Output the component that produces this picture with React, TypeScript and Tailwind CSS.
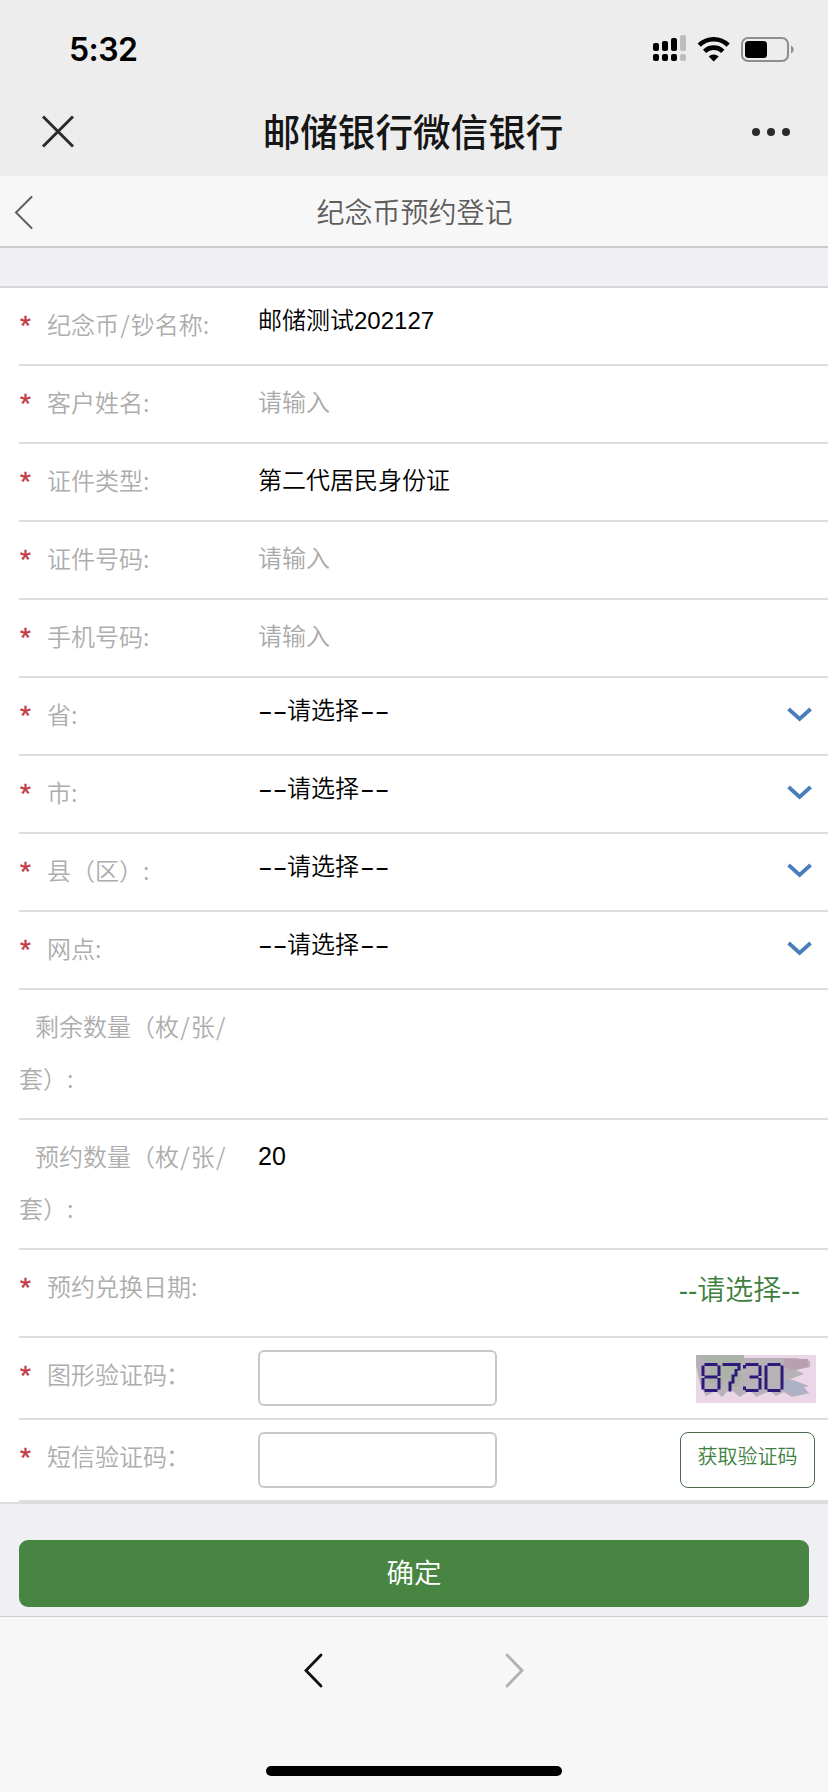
import React from "react";

type Kind = "text" | "fixed" | "input" | "select";

function Star() {
  return (
    <span className="w-[28px] shrink-0 pl-[1px] font-['Liberation_Sans'] text-[28px] leading-[52px] text-[#c23c44]">
      <span className="relative top-[2px] inline-block [-webkit-text-stroke:0.4px_#c23c44]">*</span>
    </span>
  );
}

function Slash() {
  return <span className="px-[1.2px]">/</span>;
}

const LABEL = "text-[24px] leading-[52px] font-[350] text-[#adadad] whitespace-nowrap";

function Label({ children }: { children: React.ReactNode }) {
  return (
    <div className="flex w-[239px] shrink-0 pt-[10px]">
      <Star />
      <span className={LABEL}>{children}</span>
    </div>
  );
}

function Dashes() {
  return (
    <span className="inline-block w-[29px]">
      <span className="inline-block origin-left scale-x-[1.84] font-['Liberation_Sans']">--</span>
    </span>
  );
}

function Chevron() {
  return (
    <svg className="mt-[28px] mr-[15px] ml-auto block h-[18px] w-[27px]" viewBox="0 0 27 18" fill="none">
      <path d="M2.6 3L13.6 13L24.6 3" stroke="#4a7ebb" strokeWidth="3.8" />
    </svg>
  );
}

function Row({ label, kind, value }: { label: React.ReactNode; kind: Kind; value: string }) {
  return (
    <div className="flex h-[78px] border-b-2 border-[#dcdcdc]">
      <Label>{label}</Label>
      {kind === "text" && (
        <div className="pt-[5px] font-['Liberation_Sans','Noto_Sans_CJK_SC',sans-serif] text-[24px] leading-[56px] font-[350] text-black">
          {value}
        </div>
      )}
      {kind === "fixed" && (
        <div className="pt-[7px] text-[24px] leading-[56px] font-[350] text-black">{value}</div>
      )}
      {kind === "input" && (
        <div className="pt-[7px] text-[24px] leading-[56px] font-[350] text-[#a9a9a9]">{value}</div>
      )}
      {kind === "select" && (
        <>
          <div className="pt-[3px] text-[24px] leading-[56px] font-[350] text-black">
            <Dashes />
            {value}
            <span className="inline-block w-[1px]" />
            <Dashes />
          </div>
          <Chevron />
        </>
      )}
    </div>
  );
}

function CountRow({ name, value }: { name: string; value?: string }) {
  return (
    <div className="flex h-[130px] border-b-2 border-[#dcdcdc]">
      <div className="w-[239px] shrink-0 pt-[10px]">
        <div className={LABEL}>
          <span className="pl-[16px]">{name}（枚<Slash />张<Slash /></span>
        </div>
        <div className={LABEL}>套）:</div>
      </div>
      {value && (
        <div className="pt-[8px] font-['Liberation_Sans'] text-[25px] leading-[56px] text-black">{value}</div>
      )}
    </div>
  );
}

function Captcha() {
  return (
    <svg className="mt-[17px] mr-[12px] ml-auto block h-[48px] w-[120px]" viewBox="0 0 120 48">
      <rect width="120" height="48" fill="#ead6e6" />
      <path d="M0 0H48V3H100L114 6V12L100 15L108 19L94 24L113 31L102 34L114 38L96 42L88 37L80 41L74 36L60 42L54 35L44 42L34 34L26 42L20 36L10 41L5 32L2 20L0 10Z" fill="#b8b1b8" />
      <path d="M4 0H48V6L40 10L46 20L42 32H36L30 24L24 30L12 28L14 12Z" fill="#abb2a8" />
      <path d="M88 24L104 28L112 37L98 40L86 34Z" fill="#aeb2c8" />
      <path d="M88 4H112V12L98 15L88 12Z" fill="#b99fb0" />
      <g fill="none" stroke="#2d1a78" strokeWidth="3" strokeLinecap="square">
        <path d="M10 9.5H20M10 22H20M10 35.5H20M7 12V19.5M23 12V19.5M7 24.5V33M23 24.5V33" />
        <path d="M28 9.5H43V14M40 15.5V20M37 21V27M34 28V35" />
        <path d="M51 9.5H61M55 22H61M51 35.5H61M64 12V19.5M64 24.5V33M48.5 11.5V12M48.5 33V33.5" />
        <path d="M73 9.5H83M73 35.5H83M70 12V33M86 12V33" />
      </g>
    </svg>
  );
}

function Back({ className, d, color, width }: { className: string; d: string; color: string; width: string }) {
  return (
    <svg className={className} viewBox="0 0 20 36" fill="none">
      <path d={d} stroke={color} strokeWidth={width} strokeLinecap="round" />
    </svg>
  );
}

export default function App() {
  return (
    <div className="flex h-[1792px] w-[828px] flex-col overflow-hidden bg-[#f7f7f7] font-['Noto_Sans_CJK_SC',sans-serif]">
      <header className="h-[176px] bg-[#ededed]">
        <div className="flex h-[90px] items-start">
          <div className="pt-[30px] pl-[69px] font-['Inter'] text-[32px] leading-[40px] font-semibold tracking-[-0.6px] text-black">5:32</div>
          <svg className="mt-[34px] mr-[32px] ml-auto h-[30px] w-[144px]" viewBox="0 0 144 30">
            <g fill="#000">
              <rect x="1" y="9" width="6" height="8" rx="2" />
              <rect x="10" y="7" width="6" height="10" rx="2" />
              <rect x="19" y="4" width="6" height="13" rx="2" />
              <rect x="1" y="20" width="6" height="7" rx="2" />
              <rect x="10" y="20" width="6" height="7" rx="2" />
              <rect x="19" y="20" width="6" height="7" rx="2" />
            </g>
            <g fill="#bdbdbd">
              <rect x="28" y="1" width="6" height="16" rx="2" />
              <rect x="28" y="20" width="6" height="7" rx="2" />
            </g>
            <g fill="none" stroke="#000" strokeWidth="4.6">
              <path d="M47.2 11.2A20.5 20.5 0 0 1 76.2 11.2" />
              <path d="M52.6 17.4A12.8 12.8 0 0 1 70.8 17.4" />
            </g>
            <path d="M56.7 22.4A7.2 7.2 0 0 1 66.7 22.4L61.7 27.4Z" />
            <rect x="90" y="4" width="46" height="23" rx="6" fill="none" stroke="#8e8e8e" strokeWidth="2" />
            <rect x="93" y="7" width="22" height="17" rx="3.5" />
            <path d="M139 11.5C142.5 13 142.5 18 139 19.5Z" fill="#8e8e8e" />
          </svg>
        </div>
        <div className="flex h-[83px] items-center">
          <svg className="ml-[41px] block h-[34px] w-[34px]" viewBox="0 0 34 34" fill="none">
            <path d="M2 1.5L32 31.5M32 1.5L2 31.5" stroke="#2b2b2b" strokeWidth="3" />
          </svg>
          <h1 className="mb-[3px] flex-1 text-center text-[37.6px] leading-[60px] font-medium whitespace-nowrap text-[#161616]">邮储银行微信银行</h1>
          <svg className="mr-[37px] block h-[10px] w-[40px]" viewBox="0 0 40 10" fill="#2b2b2b">
            <circle cx="5" cy="5" r="4" />
            <circle cx="20" cy="5" r="4" />
            <circle cx="35" cy="5" r="4" />
          </svg>
        </div>
      </header>

      <div className="flex h-[72px] items-center border-b-2 border-[#cbcbce] bg-[#f7f7f7]">
        <Back className="mt-[2px] ml-[13px] block h-[36px] w-[20px]" d="M18.5 3L3 18.5L18.5 34" color="#5f5f5f" width="2" />
        <div className="mr-[32px] flex-1 text-center text-[28px] leading-[40px] font-[350] text-[#5c5c5c]">纪念币预约登记</div>
      </div>

      <div className="h-[40px] shrink-0 border-b-2 border-[#d6d6dc] bg-[#efeff4]" />

      <main className="shrink-0 border-b-2 border-[#dcdcdc] bg-white pl-[19px]">
        <Row label={<>纪念币<Slash />钞名称:</>} kind="text" value="邮储测试202127" />
        <Row label="客户姓名:" kind="input" value="请输入" />
        <Row label="证件类型:" kind="fixed" value="第二代居民身份证" />
        <Row label="证件号码:" kind="input" value="请输入" />
        <Row label="手机号码:" kind="input" value="请输入" />
        <Row label="省:" kind="select" value="请选择" />
        <Row label="市:" kind="select" value="请选择" />
        <Row label="县（区）:" kind="select" value="请选择" />
        <Row label="网点:" kind="select" value="请选择" />
        <CountRow name="剩余数量" />
        <CountRow name="预约数量" value="20" />
        <div className="flex h-[88px] border-b-2 border-[#dcdcdc]">
          <Label>预约兑换日期:</Label>
          <div className="mr-[28px] ml-auto pt-[10px] text-[28px] leading-[56px] font-[350] text-[#3f7f3f]">
            <span className="font-['Liberation_Sans']">--</span>请选择<span className="font-['Liberation_Sans']">--</span>
          </div>
        </div>
        <div className="flex h-[82px] border-b-2 border-[#dcdcdc]">
          <Label>图形验证码<span className="-ml-[1px]">：</span></Label>
          <div className="mt-[12px] h-[56px] w-[239px] rounded-[6px] border-2 border-[#c8c8c8]" />
          <Captcha />
        </div>
        <div className="flex h-[82px] border-b-2 border-[#dcdcdc]">
          <Label>短信验证码<span className="-ml-[1px]">：</span></Label>
          <div className="mt-[12px] h-[56px] w-[239px] rounded-[6px] border-2 border-[#c8c8c8]" />
          <button className="mt-[12px] mr-[13px] ml-auto h-[56px] w-[135px] rounded-[8px] border border-[#4c6b4c] pb-[8px] text-[20px] leading-[40px] font-[350] text-[#3f7f3f]">
            获取验证码
          </button>
        </div>
      </main>

      <div className="h-[113px] shrink-0 border-b border-[#cfcfcf] bg-[#efeff4] px-[19px] pt-[36px]">
        <button className="h-[67px] w-full rounded-[9px] bg-[#498542] pb-[5px] text-[27.5px] leading-[62px] font-[350] text-white">确定</button>
      </div>

      <footer className="flex flex-1 flex-col items-center pt-[35px]">
        <div className="flex w-[222px] justify-between">
          <Back className="block h-[36px] w-[20px]" d="M18 3L3 18.5L18 34" color="#111111" width="2.8" />
          <Back className="block h-[36px] w-[20px]" d="M2 3L17 18.5L2 34" color="#b0b0b0" width="2.8" />
        </div>
        <div className="mt-[78px] h-[10px] w-[296px] rounded-full bg-black" />
      </footer>
    </div>
  );
}
